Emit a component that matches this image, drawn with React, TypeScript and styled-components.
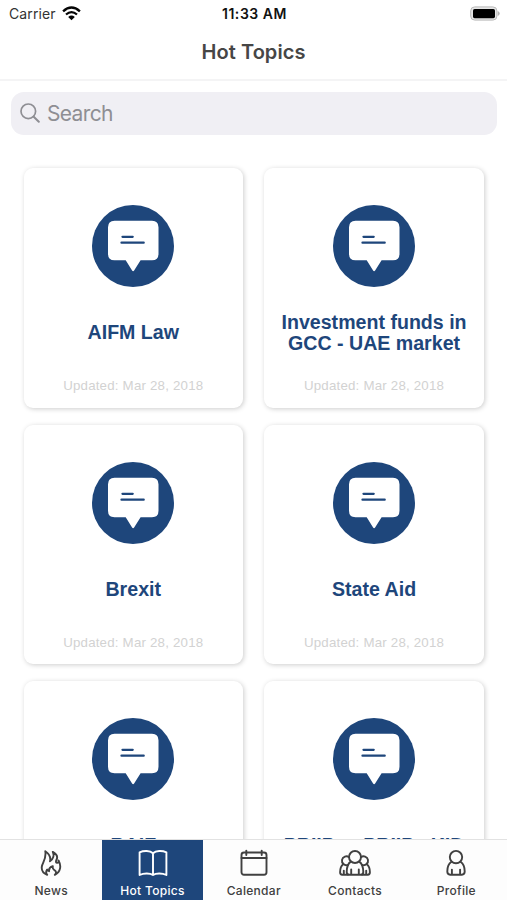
import React from "react";
import styled, { createGlobalStyle } from "styled-components";

const NAVY = "#1e467b";

const GlobalStyle = createGlobalStyle`
  *, *::before, *::after { box-sizing: border-box; }
  html, body { margin: 0; padding: 0; background: #fff; }
  svg { display: block; }
`;

const Screen = styled.div`
  width: 507px;
  height: 900px;
  display: flex;
  flex-direction: column;
  overflow: hidden;
  background: #fff;
  font-family: Inter, "Liberation Sans", sans-serif;
`;

const StatusBar = styled.div`
  flex: none;
  height: 27px;
  padding: 0 7px 0 9px;
  display: grid;
  grid-template-columns: 1fr auto 1fr;
  align-items: center;
  color: #111;
`;

const Carrier = styled.div`
  display: flex;
  align-items: center;
  gap: 6px;
  font-size: 14px;
  line-height: 27px;
  letter-spacing: 0.1px;
  color: #333;
`;

const Clock = styled.div`
  font-size: 14px;
  line-height: 27px;
  font-weight: 600;
  letter-spacing: 0.55px;
`;

const BatterySlot = styled.div`
  display: flex;
  justify-content: flex-end;
`;

const NavBar = styled.header`
  flex: none;
  height: 54px;
  border-bottom: 2px solid #f4f4f5;
  display: flex;
  justify-content: center;
`;

const NavTitle = styled.h1`
  margin: 0;
  font-size: 20px;
  line-height: 51px;
  font-weight: 600;
  letter-spacing: 0.05px;
  color: #464646;
`;

const SearchArea = styled.div`
  flex: none;
  padding: 11px 10px 0 11px;
`;

const SearchField = styled.div`
  height: 43px;
  padding: 0 9px 1px;
  display: flex;
  align-items: center;
  gap: 7px;
  border-radius: 13px;
  background: #f0eff4;
  color: #8e8e93;
  font-size: 21px;
  letter-spacing: -0.65px;
`;

const Content = styled.main`
  flex: 1;
  min-height: 0;
  overflow: hidden;
  padding: 33px 23px 0 23.5px;
`;

const Grid = styled.div`
  display: grid;
  grid-template-columns: 219.5px 219.5px;
  column-gap: 21.3px;
  row-gap: 17px;
`;

const Card = styled.article`
  height: 239.5px;
  padding-top: 37px;
  display: flex;
  flex-direction: column;
  align-items: center;
  border-radius: 9px;
  background: #fff;
  box-shadow: 1px 1px 5px rgba(0, 0, 0, 0.2);
  font-family: "Liberation Sans", Arial, sans-serif;
`;

const CardTitle = styled.h2`
  flex: none;
  margin: 24px 0 0;
  width: 200px;
  height: 44px;
  display: flex;
  flex-direction: column;
  justify-content: center;
  align-items: center;
  font-size: 19.6px;
  line-height: 21.5px;
  font-weight: 700;
  white-space: nowrap;
  color: ${NAVY};
`;

const Updated = styled.p`
  margin: 23px 0 0;
  font-size: 13.3px;
  line-height: 16px;
  letter-spacing: 0.2px;
  color: #d2d2d2;
`;

const TabBar = styled.nav`
  flex: none;
  height: 60px;
  padding-left: 0.6px;
  display: grid;
  grid-template-columns: repeat(5, 1fr);
  background: #fdfdfd;
  box-shadow: 0 -1px 0 #e2e2e2;
  position: relative;
`;

const Tab = styled.div<{ $active?: boolean }>`
  display: flex;
  flex-direction: column;
  align-items: center;
  padding-top: 9px;
  gap: 6px;
  background: ${(p) => (p.$active ? NAVY : "transparent")};
  color: ${(p) => (p.$active ? "#fff" : "#404040")};
`;

const TabLabel = styled.span`
  font-size: 12px;
  line-height: 16px;
  font-weight: 500;
  letter-spacing: 0.3px;
  white-space: nowrap;
`;

const WifiIcon = () => (
  <svg width="19" height="15" viewBox="0 0 19 15" fill="none" stroke="#050505">
    <path d="M1.1 5.4 Q9.5 -2.2 17.9 5.4" strokeWidth="2.4" />
    <path d="M4 8.5 Q9.5 3.7 15 8.5" strokeWidth="2.3" />
    <path d="M6.2 10.9 Q9.5 8.1 12.8 10.9 L9.5 14.2Z" fill="#050505" stroke="none" />
  </svg>
);

const BatteryIcon = () => (
  <svg width="31" height="15" viewBox="0 0 31 15">
    <rect x="1.7" y=".9" width="26.2" height="13.2" rx="4" fill="#e6e6e6" stroke="#b9b9b9" />
    <rect x="4" y="3" width="22" height="9.2" rx="1.6" fill="#000" />
    <path d="M28.7 5 Q30.7 5.8 30.7 7.5 T28.7 10Z" fill="#b4b4b4" />
  </svg>
);

const SearchIcon = () => (
  <svg width="20" height="20" viewBox="0 0 20 20" fill="none" stroke="#8e8e93" strokeLinecap="round">
    <circle cx="8.3" cy="8.3" r="7.3" strokeWidth="1.7" />
    <path d="M13.7 13.7 L18.8 18.8" strokeWidth="2" />
  </svg>
);

const TopicIcon = () => (
  <svg width="82" height="82" viewBox="0 0 82 82">
    <circle cx="41" cy="41" r="41" fill={NAVY} />
    <path
      d="M22.5 15.7H60Q66.5 15.7 66.5 22.2V48.8Q66.5 55.3 60 55.3H48.6L42.1 65.4Q41.1 66.9 40.1 65.4L33.7 55.3H22.5Q16 55.3 16 48.8V22.2Q16 15.7 22.5 15.7Z"
      fill="#fff"
    />
    <path d="M30.5 31.8H40.7M29.5 37.7H51.7" stroke={NAVY} strokeWidth="2.3" strokeLinecap="round" />
  </svg>
);

const TabSvg = ({ width, children }: { width: number; children: React.ReactNode }) => (
  <svg
    width={width}
    height="28"
    viewBox={`0 0 ${width} 28`}
    fill="none"
    stroke="currentColor"
    strokeWidth="1.9"
    strokeLinecap="round"
    strokeLinejoin="round"
  >
    {children}
  </svg>
);

const FlameIcon = () => (
  <TabSvg width={22}>
    <path d="M7.2 25.8C3.2 24.2 1.2 21 1.9 17.3C2.6 13.7 6.6 9.5 5.3 2.3C9 4.8 11 8.4 10 12.3C13.1 10.4 14.4 6.7 12.8 2.9C16.6 5 17.9 8 16.5 10.7C15.5 12.8 16.1 14 17.2 13.9C18.3 13.8 18.7 12.8 18.5 11.4C21.4 16.4 21 22.7 14.8 25.8C16.8 23.8 16.2 22.1 14.4 21.1C12.9 20.2 12.4 18.8 12.8 17.2C10.1 18.1 8.7 19.9 9.1 22.2C8 21.9 7.4 21.4 7.1 20.6C5.8 22.5 6 24.4 7.2 25.8Z" />
  </TabSvg>
);

const BookIcon = () => (
  <TabSvg width={30}>
    <path d="M15 4.3C12 1.4 5.8 1.4 1.6 3.3V26C5.6 24 12 23.9 15 26C18 23.9 24.4 24 28.4 26V3.3C24.2 1.4 18 1.4 15 4.3ZM15 4.3V26" />
  </TabSvg>
);

const CalendarIcon = () => (
  <TabSvg width={28}>
    <rect x="1.5" y="3.5" width="25" height="22.3" rx="2.5" />
    <path d="M1.5 9H26.5M6.3 1.6V6M21.7 1.6V6" />
  </TabSvg>
);

const ContactsIcon = () => (
  <TabSvg width={32}>
    <circle cx="16" cy="8" r="6" />
    <path d="M10.2 8.4A4.4 4.4 0 1 0 8.8 15.9M21.8 8.4A4.4 4.4 0 1 1 23.2 15.9" />
    <path d="M11.8 12.6C8.9 14.6 7.7 18.4 7.7 23C7.7 24.9 8.6 25.7 10.2 25.7H21.8C23.4 25.7 24.3 24.9 24.3 23C24.3 18.4 23.1 14.6 20.2 12.6M12.2 25.4V20.4M19.8 25.4V20.4" />
    <path d="M4.2 15.2C2 16.8 1.1 19.7 1.1 23.3C1.1 24.9 1.8 25.7 3.2 25.7H9M27.8 15.2C30 16.8 30.9 19.7 30.9 23.3C30.9 24.9 30.2 25.7 28.8 25.7H23M4.8 25.4V21.6M27.2 25.4V21.6" />
  </TabSvg>
);

const ProfileIcon = () => (
  <TabSvg width={20}>
    <circle cx="10" cy="8.1" r="6.2" />
    <path d="M5.5 12.8C2.6 14.6 1.3 18.2 1.3 22.6C1.3 24.9 2.3 25.7 4.1 25.7H15.9C17.7 25.7 18.7 24.9 18.7 22.6C18.7 18.2 17.4 14.6 14.5 12.8M5.9 25.4V20.6M14.1 25.4V20.6" />
  </TabSvg>
);

interface Topic {
  lines: string[];
}

const topics: Topic[] = [
  { lines: ["AIFM Law"] },
  { lines: ["Investment funds in", "GCC - UAE market"] },
  { lines: ["Brexit"] },
  { lines: ["State Aid"] },
  { lines: ["RAIF"] },
  { lines: ["PRIIPs - PRIIPs KID"] },
];

const tabs = [
  { label: "News", Icon: FlameIcon },
  { label: "Hot Topics", Icon: BookIcon, active: true },
  { label: "Calendar", Icon: CalendarIcon },
  { label: "Contacts", Icon: ContactsIcon },
  { label: "Profile", Icon: ProfileIcon },
];

export default function App() {
  return (
    <>
      <GlobalStyle />
      <Screen>
        <StatusBar>
          <Carrier>
            <span>Carrier</span>
            <WifiIcon />
          </Carrier>
          <Clock>11:33 AM</Clock>
          <BatterySlot>
            <BatteryIcon />
          </BatterySlot>
        </StatusBar>
        <NavBar>
          <NavTitle>Hot Topics</NavTitle>
        </NavBar>
        <SearchArea>
          <SearchField>
            <SearchIcon />
            <span>Search</span>
          </SearchField>
        </SearchArea>
        <Content>
          <Grid>
            {topics.map((topic) => (
              <Card key={topic.lines[0]}>
                <TopicIcon />
                <CardTitle>
                  {topic.lines.map((line) => (
                    <span key={line}>{line}</span>
                  ))}
                </CardTitle>
                <Updated>Updated: Mar 28, 2018</Updated>
              </Card>
            ))}
          </Grid>
        </Content>
        <TabBar>
          {tabs.map(({ label, Icon, active }) => (
            <Tab key={label} $active={active}>
              <Icon />
              <TabLabel>{label}</TabLabel>
            </Tab>
          ))}
        </TabBar>
      </Screen>
    </>
  );
}
